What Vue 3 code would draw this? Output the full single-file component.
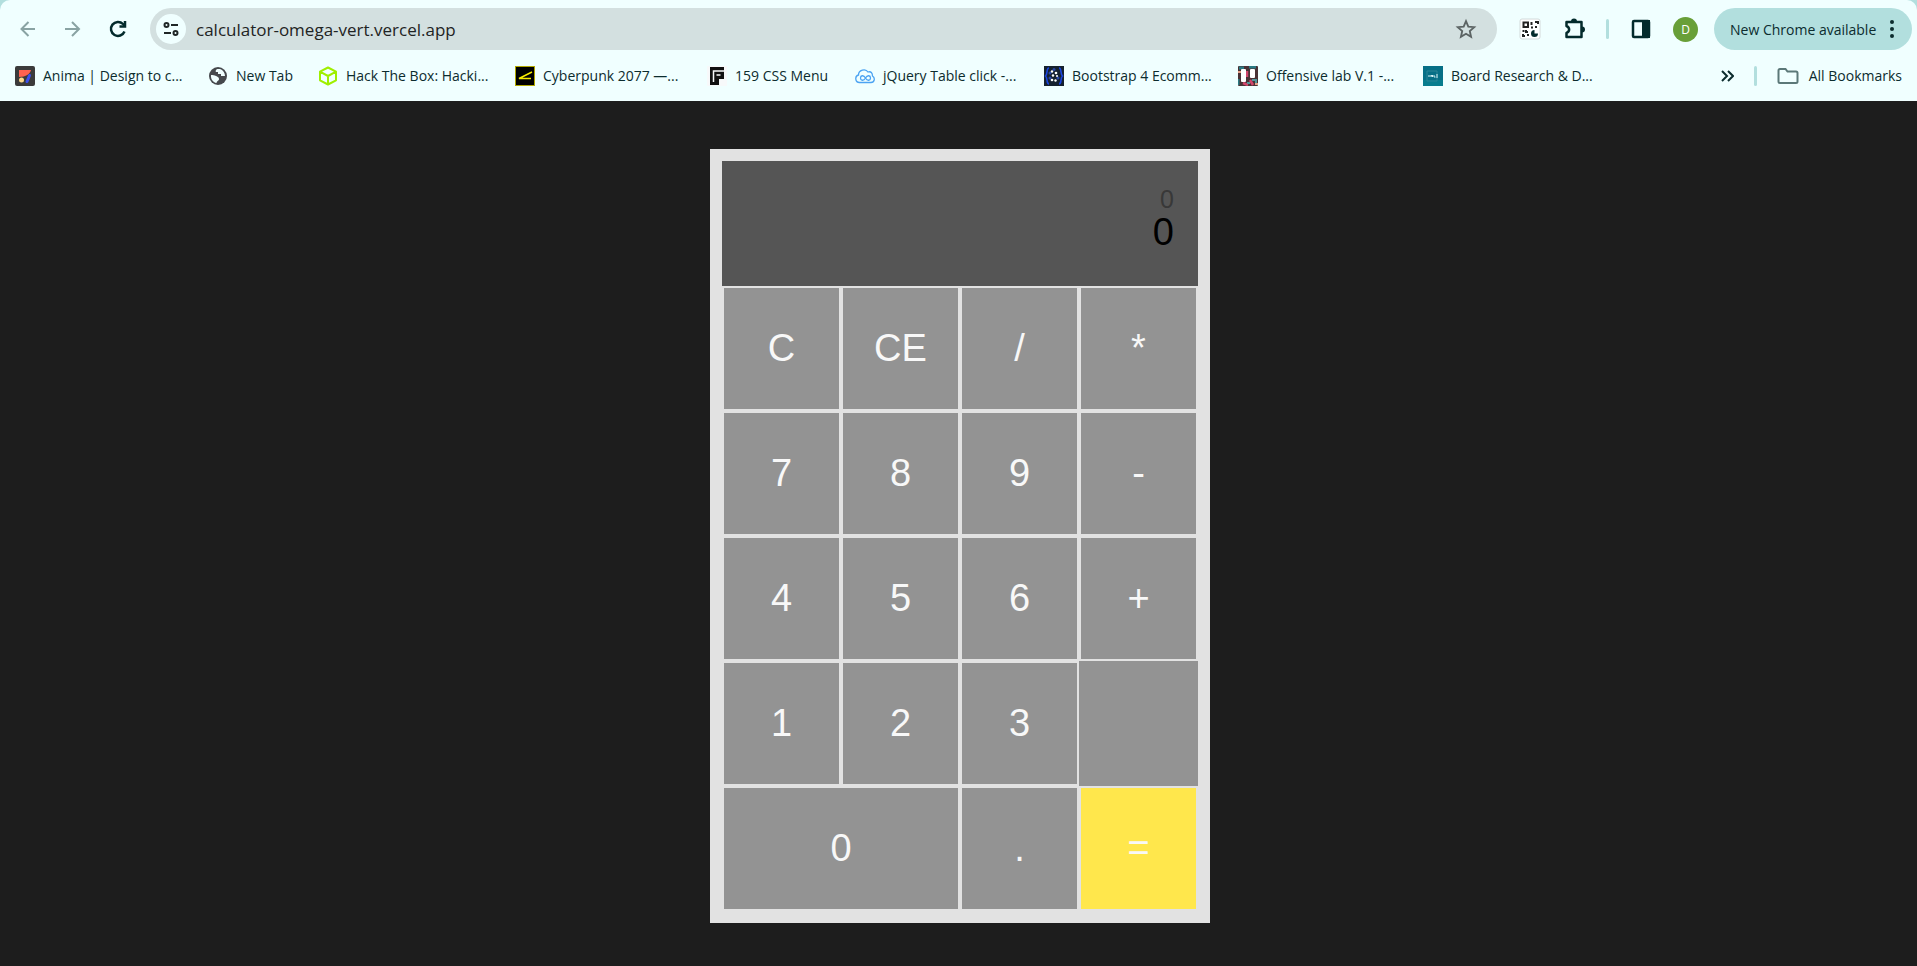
<script setup>
import { ref } from 'vue'

const address = ref('calculator-omega-vert.vercel.app')

const bookmarks = [
  { icon: 'anima', label: 'Anima | Design to c...' },
  { icon: 'globe', label: 'New Tab' },
  { icon: 'cube', label: 'Hack The Box: Hacki...' },
  { icon: 'cyber', label: 'Cyberpunk 2077 —...' },
  { icon: 'f', label: '159 CSS Menu' },
  { icon: 'cloud', label: 'jQuery Table click -...' },
  { icon: 'braces', label: 'Bootstrap 4 Ecomm...' },
  { icon: 'lab', label: 'Offensive lab V.1 -...' },
  { icon: 'board', label: 'Board Research & D...' },
]

const keys = [
  'C', 'CE', '/', '*',
  '7', '8', '9', '-',
  '4', '5', '6', '+',
  '1', '2', '3', '',
  '0', '.', '=',
]

const history = ref('0')
const current = ref('0')
let stored = null
let operator = null
let fresh = true

function compute(a, b, op) {
  if (op === '+') return a + b
  if (op === '-') return a - b
  if (op === '*') return a * b
  return a / b
}

function press(key) {
  if (key === 'C') {
    current.value = '0'
    history.value = '0'
    stored = null
    operator = null
    fresh = true
  } else if (key === 'CE') {
    current.value = '0'
    fresh = true
  } else if (/[0-9.]/.test(key)) {
    if (key === '.' && !fresh && current.value.includes('.')) return
    current.value = fresh ? (key === '.' ? '0.' : key) : current.value + key
    fresh = false
  } else {
    const value = Number(current.value)
    stored = operator && !fresh ? compute(stored, value, operator) : value
    operator = key === '=' ? null : key
    current.value = String(stored)
    history.value = operator ? stored + ' ' + operator : String(stored)
    fresh = true
  }
}
</script>

<template>
  <div class="window">
    <header class="chrome">
      <div class="toolbar">
        <nav class="nav" aria-label="Navigation">
          <button class="icon-button faded" aria-label="Back">
            <svg viewBox="0 0 24 24"><path d="M19 12H6M12.500 5L5.500 12l7 7" /></svg>
          </button>
          <button class="icon-button faded" aria-label="Forward">
            <svg viewBox="0 0 24 24"><path d="M4 12h13M11 5l7 7-7 7" /></svg>
          </button>
          <button class="icon-button" aria-label="Reload">
            <svg viewBox="0 0 24 24"><path class="bold" d="M18.500 14.500A7 7 0 1 1 17 7l1.500 1.500" /><path class="bold" d="M19 4v5.500h-5.500" /></svg>
          </button>
        </nav>

        <div class="omnibox">
          <button class="site-info" aria-label="Site information">
            <svg viewBox="0 0 20 20"><circle cx="5.500" cy="6" r="2" /><path d="M10 6h7M3 14h7" /><circle cx="14.500" cy="14" r="2" /></svg>
          </button>
          <input v-model="address" class="address" type="text" aria-label="Address" spellcheck="false" />
          <button class="icon-button star" aria-label="Bookmark this page">
            <svg viewBox="-1 -1 26 26"><path d="M12 3.500l2.500 5.900 6.400.6-4.800 4.200 1.400 6.300-5.500-3.300-5.500 3.300 1.400-6.300L3.100 10l6.400-.6z" /></svg>
          </button>
        </div>

        <div class="actions">
          <button class="icon-button" aria-label="QR code extension">
            <svg viewBox="0 0 24 24">
              <rect x="2" y="2" width="20" height="20" rx="2" class="qr-card" />
              <path class="qr" d="M5.500 5.500h4.500v4.500H5.500zM13.500 5v3M17 5h3v2M13 10.500h2M18 9v2M4.500 14h2M8 13v2h2M5 17v2h2M10 17v2" />
              <path class="solid" d="M16.500 13v3.500H20a3.500 3.500 0 1 1-3.500-3.500z" />
            </svg>
          </button>
          <button class="icon-button" aria-label="Extensions">
            <svg viewBox="0 0 24 24"><path class="bold" d="M4.500 5h15v15h-15v-4c3.500-1.500 3.500-5.500 0-7z" stroke-linejoin="round" /><path class="solid" d="M9 4.500a3 3 0 0 1 6 0zM20 9.500a3 3 0 0 1 0 6z" /></svg>
          </button>
          <span class="divider"></span>
          <button class="icon-button" aria-label="Side panel">
            <svg viewBox="0 0 24 24"><rect class="bold" x="4" y="4" width="16" height="16" rx="1" /><path class="solid" d="M13 3h8v18h-8z" /></svg>
          </button>
          <button class="avatar" aria-label="Profile">D</button>
        </div>

        <button class="update">
          <span>New Chrome available</span>
          <svg viewBox="0 0 6 20"><circle cx="3" cy="3" r="2" /><circle cx="3" cy="10" r="2" /><circle cx="3" cy="17" r="2" /></svg>
        </button>
      </div>

      <div class="bookmarks">
        <nav class="bookmark-list" aria-label="Bookmarks">
          <a v-for="b in bookmarks" :key="b.label" class="bookmark" href="#">
            <svg v-if="b.icon === 'anima'" viewBox="0 0 20 20"><rect width="20" height="20" rx="2" fill="#3b3b3b" /><path d="M4 4h12c-1 4-5 7-12 7z" fill="#ff6250" /><circle cx="6.500" cy="14" r="2.500" fill="#ffd88a" /><path d="M14.500 9.500l-2.500 6" stroke="#3c50ee" stroke-width="3" stroke-linecap="round" /></svg>
            <svg v-else-if="b.icon === 'globe'" viewBox="0 0 20 20"><circle cx="10" cy="10" r="9" fill="#46494d" /><path d="M3 9c2 0 3.500 0 5 1s3 1 3 3-2 1.500-2.500 4C5 16.500 2.500 13 3 9zM10 3c-1.500 0-3 1.500-2 3h2v2h3v2h4c0-3-2-6-5-7z" fill="#f0ffff" /></svg>
            <svg v-else-if="b.icon === 'cube'" viewBox="0 0 20 20" fill="none" stroke="#9fef00" stroke-width="2" stroke-linejoin="round"><path d="M10 1.500l8 4.200v8.600l-8 4.200-8-4.200V5.700zM2 5.700l8 4.300 8-4.300M10 10v8" /></svg>
            <svg v-else-if="b.icon === 'cyber'" viewBox="0 0 20 20"><rect x=".5" y=".5" width="19" height="19" fill="#000" stroke="#b1a800" /><path d="M17 6L4 12.500h12" fill="none" stroke="#f6ea00" stroke-width="1.500" /></svg>
            <svg v-else-if="b.icon === 'f'" viewBox="0 0 20 20"><rect width="20" height="20" fill="#f7f9fa" /><path d="M3 1h14v12h-5v6H3z" fill="#111" /><path d="M6.500 16V5H17M9.500 9h4" fill="none" stroke="#f7f9fa" stroke-width="1.500" /></svg>
            <svg v-else-if="b.icon === 'cloud'" viewBox="0 0 20 20" fill="none" stroke="#4ba3f2" stroke-width="1.300"><path d="M4.500 16.500C0 16.500-.5 10 3.500 9c0-5 7-7 9.500-3 3-1 4.500 1 4.500 4 3 2 2 6.500-1.500 6.500z" /><path d="M10.500 12c-2-3.500-5-2.500-5 0s3 3.500 5 0 5-2.500 5 0-3 3.500-5 0z" /></svg>
            <svg v-else-if="b.icon === 'braces'" viewBox="0 0 20 20"><rect width="20" height="20" fill="#15212f" /><path d="M5 2C2 2 4 8 1.500 10 4 12 2 18 5 18M15 2c3 0 1 6 3.500 8-2.500 2-.5 8-3.500 8" fill="none" stroke="#1845df" stroke-width="1.600" /><g fill="#2947a5"><circle cx="10" cy="3.500" r="1.500" /><circle cx="6" cy="7" r="1.500" /><circle cx="14" cy="12" r="1.500" /><circle cx="6" cy="12" r="1.500" /></g><g fill="#fff"><circle cx="8" cy="5.500" r="1.200" /><circle cx="12" cy="7" r="1.300" /><circle cx="9" cy="9.500" r="1.200" /><circle cx="13" cy="10" r="1" /><circle cx="8" cy="14" r="1.300" /><circle cx="11.500" cy="14.500" r="1.200" /></g></svg>
            <svg v-else-if="b.icon === 'lab'" viewBox="0 0 20 20"><rect width="20" height="20" rx="1" fill="#493235" /><path d="M1 2h5M11 1h7M0 13v6" stroke="#2a7a83" stroke-width="3" /><path d="M9 5v6M12 14l3 5M5 17l5 2" stroke="#d3456c" stroke-width="2.500" /><path d="M14 14h4v3M9 17h3" stroke="#52969a" stroke-width="2" fill="none" /><path d="M0 6h3M17 18h3" stroke="#e5a289" stroke-width="2" /><rect x="3" y="3" width="5" height="13" rx="1" fill="#fff" /><rect x="12" y="3" width="5" height="9" rx="1" fill="#fff" /></svg>
            <svg v-else viewBox="0 0 20 20"><rect width="20" height="20" fill="#066f86" /><path d="M0 14h20v6H0z" fill="#087d8e" /><path d="M4 5h10v10H4z" fill="none" stroke="#2a8495" /><path d="M5 10h2M8 11V9l1.500 2V9M11 9v2h1.500M14 8v4" fill="none" stroke="#d5f2f5" /></svg>
            <span>{{ b.label }}</span>
          </a>
        </nav>
        <div class="bookmark-end">
          <button class="more" aria-label="More bookmarks">
            <svg viewBox="0 0 14 12"><path d="M2 1l5 5-5 5M8 1l5 5-5 5" /></svg>
          </button>
          <span class="divider"></span>
          <a class="bookmark" href="#">
            <svg class="folder" viewBox="0 0 22 20"><path d="M3 3h5.500l2 2.500H19c1 0 1.500.5 1.500 1.500v8.500c0 1-.5 1.500-1.500 1.500H3c-1 0-1.500-.5-1.500-1.500v-11C1.500 3.500 2 3 3 3z" /></svg>
            <span>All Bookmarks</span>
          </a>
        </div>
      </div>
    </header>

    <main class="page">
      <section class="calculator" aria-label="Calculator">
        <div class="display">
          <output class="history">{{ history }}</output>
          <output class="current">{{ current }}</output>
        </div>
        <template v-for="(key, i) in keys" :key="i">
          <button
            v-if="key"
            class="key"
            :class="{ wide: key === '0', equals: key === '=' }"
            @click="press(key)"
          >{{ key }}</button>
          <div v-else class="blank"></div>
        </template>
      </section>
    </main>
  </div>
</template>

<style>
body {
  background: #1d1d1d;
}
</style>

<style scoped>
.window {
  display: flex;
  flex-direction: column;
  min-height: 100vh;
  background: #b2dfde;
  font-family: "Open Sans", "Noto Sans", sans-serif;
  font-size: 14px;
  color: #0c2c2e;
}

button {
  margin: 0;
  padding: 0;
  border: 0;
  background: none;
  font: inherit;
  color: inherit;
  cursor: pointer;
}

svg {
  display: block;
  flex: none;
}

.chrome {
  background: #f0ffff;
  border-radius: 10px 10px 0 0;
}

.toolbar {
  display: flex;
  align-items: center;
  padding: 8px 5px 0 16px;
}

.nav {
  display: flex;
  gap: 21px;
  margin-right: 20px;
}

.icon-button {
  width: 24px;
  height: 24px;
}

.icon-button svg {
  width: 24px;
  height: 24px;
  fill: none;
  stroke: #032b2c;
  stroke-width: 2;
}

.icon-button .bold {
  stroke-width: 2.500;
}

.icon-button .solid {
  fill: #032b2c;
  stroke: none;
}

.icon-button .qr-card {
  fill: #fff;
  stroke: #d3dada;
  stroke-width: 1;
}

.icon-button .qr {
  stroke: #222;
  stroke-width: 2;
}

.faded svg {
  stroke: #89a3a3;
}

.omnibox {
  display: flex;
  flex: 1;
  align-items: center;
  height: 42px;
  padding: 0 19px 0 6px;
  border-radius: 21px;
  background: #d3e0e0;
}

.site-info {
  display: flex;
  align-items: center;
  justify-content: center;
  width: 30px;
  height: 30px;
  border-radius: 50%;
  background: #f0ffff;
}

.site-info svg {
  width: 20px;
  height: 20px;
  fill: none;
  stroke: #1f2626;
  stroke-width: 2;
}

.address {
  flex: 1;
  min-width: 0;
  margin-left: 10px;
  padding: 0;
  border: 0;
  outline: 0;
  background: none;
  font: inherit;
  font-size: 17px;
  color: #1f2424;
}

.icon-button.star svg {
  stroke: #5c6464;
}

.actions {
  display: flex;
  align-items: center;
  gap: 20px;
  margin: 0 16px 0 21px;
}

.divider {
  width: 3px;
  height: 20px;
  border-radius: 2px;
  background: #b2dfde;
}

.avatar {
  width: 25px;
  height: 25px;
  border-radius: 50%;
  background: #689f38;
  font-size: 12px;
  color: #fff;
}

.update {
  display: flex;
  align-items: center;
  justify-content: space-between;
  width: 198px;
  height: 42px;
  padding: 0 17px 0 16px;
  border-radius: 21px;
  background: #b2dfde;
  white-space: nowrap;
}

.update svg {
  width: 6px;
  height: 20px;
  fill: #0c2c2e;
}

.bookmarks {
  display: flex;
  justify-content: space-between;
  align-items: center;
  height: 51px;
  padding: 0 15px;
}

.bookmark-list {
  display: grid;
  grid-template-columns: 193px 110px 197px 192px 148px 189px 194px 185px auto;
}

.bookmark {
  display: flex;
  align-items: center;
  gap: 8px;
  color: inherit;
  text-decoration: none;
  white-space: nowrap;
}

.bookmark svg {
  width: 20px;
  height: 20px;
}

.bookmark-end {
  display: flex;
  align-items: center;
  gap: 20px;
}

.bookmark-end .bookmark {
  gap: 10px;
}

.more svg {
  width: 14px;
  height: 12px;
  fill: none;
  stroke: #0c2c2e;
  stroke-width: 2;
}

.bookmark .folder {
  width: 22px;
  fill: none;
  stroke: #5b7878;
  stroke-width: 2;
}

.page {
  flex: 1;
  padding: 48px 15px 43px 18px;
  background: #1d1d1d;
}

.calculator {
  display: grid;
  grid-template-columns: repeat(4, 1fr);
  grid-auto-rows: 125px;
  box-sizing: border-box;
  max-width: 500px;
  margin: 0 auto;
  padding: 12px;
  background: #e2e2e2;
  font-family: "Liberation Sans", Arial, sans-serif;
}

.display {
  display: flex;
  grid-column: 1 / -1;
  flex-direction: column;
  align-items: flex-end;
  padding: 24px;
  background: #555;
}

.history {
  font-size: 25px;
  line-height: 28px;
  color: #383838;
}

.current {
  font-size: 38px;
  line-height: 38px;
  color: #000;
}

.key {
  border: 2px solid #e2e2e2;
  background: #939393;
  font-size: 38px;
  color: #f8f8f8;
}

.wide {
  grid-column: span 2;
}

.equals {
  background: #ffe74c;
}

.blank {
  background: #939393;
}
</style>
